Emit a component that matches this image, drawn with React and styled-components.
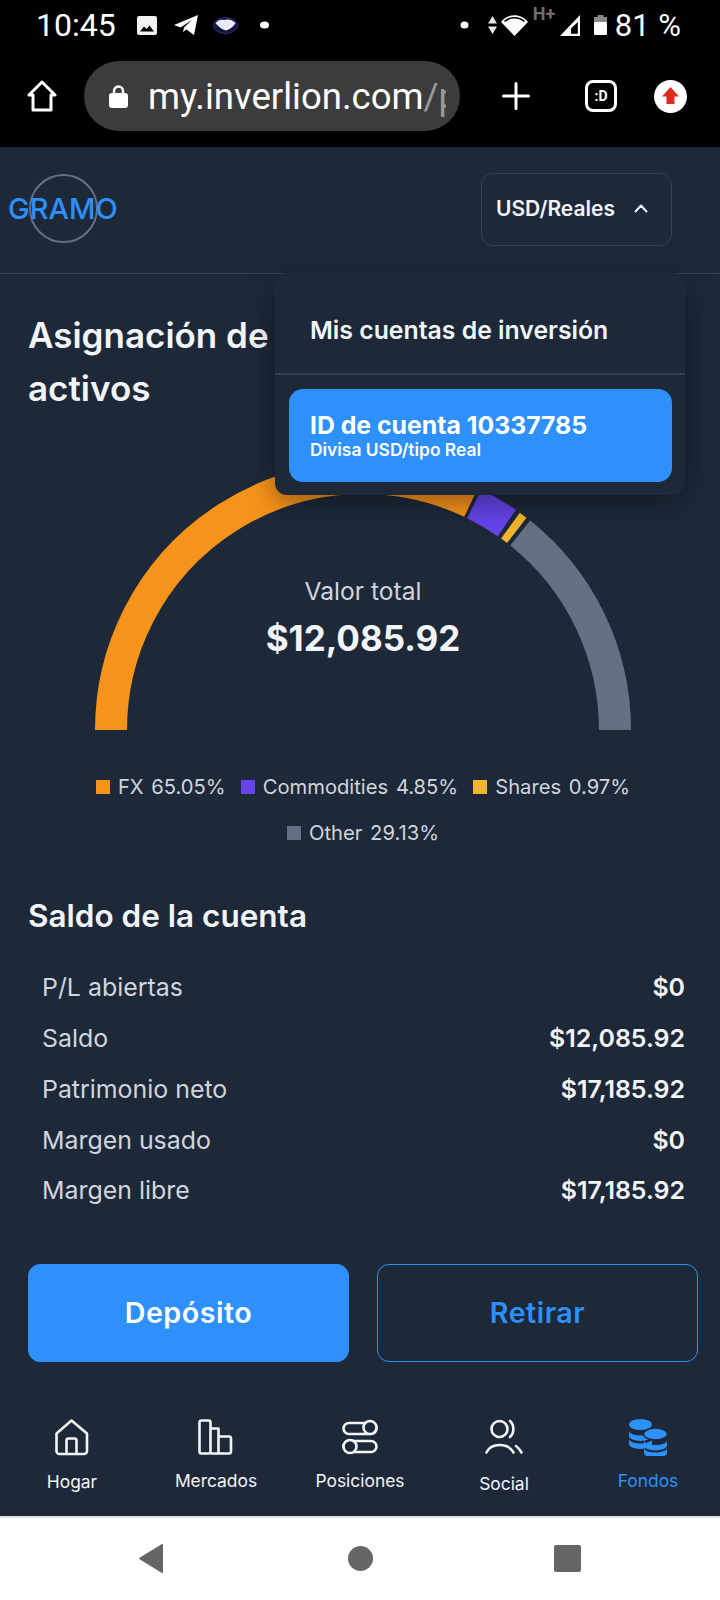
import React from "react";
import styled, { createGlobalStyle } from "styled-components";

const Navy = "#1d2939";
const Blue = "#2e90fa";
const Light = "#f2f4f7";
const Muted = "#d0d5dd";
const Line = "#344054";

const GlobalStyle = createGlobalStyle`
  html, body {
    margin: 0;
    padding: 0;
    background: ${Navy};
  }
  * { box-sizing: border-box; }
`;

const Page = styled.div`
  display: flex;
  flex-direction: column;
  width: 720px;
  height: 1600px;
  overflow: hidden;
  background: ${Navy};
  font-family: "Inter", "Liberation Sans", sans-serif;
`;

/* phone chrome */
const StatusBar = styled.div`
  display: flex;
  align-items: center;
  height: 50px;
  padding: 0 39px 0 36px;
  background: #000;
  color: #fff;
  font-family: "Roboto", "Liberation Sans", sans-serif;
`;

const Clock = styled.span`
  font-size: 32px;
  font-weight: 400;
  width: 79px;
  white-space: nowrap;
`;

const Battery = styled.span`
  font-size: 31px;
  margin-left: 8px;
  white-space: nowrap;
  word-spacing: 1px;
`;

const StatusIcon = styled.svg`
  flex: none;
  margin-left: ${(p) => p.$gap || 0}px;
  margin-top: ${(p) => p.$top || 0}px;
`;

const Spacer = styled.div`
  flex: 1;
`;

const HPlus = styled.span`
  align-self: flex-start;
  margin: 3px 0 0 5px;
  width: 24px;
  font-size: 18px;
  font-weight: 700;
  color: #6e6e6e;
`;

const BrowserBar = styled.div`
  display: flex;
  align-items: center;
  height: 97px;
  padding: 0 33px 5px 27px;
  background: #000;
`;

const UrlPill = styled.div`
  display: flex;
  align-items: center;
  flex: none;
  width: 376px;
  height: 70px;
  margin-left: 27px;
  padding-left: 25px;
  border-radius: 35px;
  background: #3c3c3c;
`;

const UrlText = styled.span`
  display: block;
  width: 298px;
  margin-left: 20px;
  overflow: hidden;
  font-family: "Roboto", "Liberation Sans", sans-serif;
  font-size: 36.5px;
  color: #fff;
  white-space: nowrap;
`;

const UrlRest = styled.span`
  color: #9a9a9a;
`;

const TabCount = styled.div`
  display: flex;
  align-items: center;
  justify-content: center;
  flex: none;
  width: 32px;
  height: 32px;
  margin-left: 55px;
  border: 3px solid #fff;
  border-radius: 8px;
  font-family: "Roboto", "Liberation Sans", sans-serif;
  font-size: 14px;
  font-weight: 700;
  color: #fff;
`;

const SystemNav = styled.div`
  display: flex;
  align-items: center;
  height: 84px;
  border-top: 2px solid #e2e2e0;
  background: #fff;
  padding-left: 139px;
  padding-bottom: 2px;
`;

/* app header */
const Header = styled.header`
  position: relative;
  display: flex;
  align-items: center;
  justify-content: space-between;
  height: 127px;
  padding: 0 48px 2px 29px;
  border-bottom: 1px solid ${Line};
`;

const LogoRing = styled.div`
  position: relative;
  width: 69px;
  height: 69px;
  margin-top: -2px;
  border: 2px solid #667085;
  border-radius: 50%;
`;

const LogoText = styled.span`
  position: absolute;
  left: -23px;
  top: 16px;
  font-size: 29px;
  font-weight: 500;
  line-height: 34px;
  color: ${Blue};
`;

const AccountSelect = styled.div`
  display: flex;
  align-items: center;
  width: 191px;
  height: 73px;
  padding: 0 0 2px 14px;
  border: 1px solid ${Line};
  border-radius: 12px;
  font-size: 21px;
  font-weight: 600;
  color: ${Light};
`;

const Chevron = styled.svg`
  margin-left: 19px;
`;

const Dropdown = styled.div`
  position: absolute;
  z-index: 5;
  top: 126px;
  left: 275px;
  width: 410px;
  height: 222px;
  border-radius: 12px;
  background: ${Navy};
  box-shadow: 0 8px 28px rgba(0, 0, 0, 0.38);
`;

const DropdownTitle = styled.div`
  display: flex;
  align-items: center;
  height: 102px;
  padding: 14px 0 0 35px;
  border-bottom: 2px solid ${Line};
  font-size: 24.8px;
  font-weight: 600;
  color: ${Light};
`;

const AccountCard = styled.div`
  display: flex;
  flex-direction: column;
  justify-content: center;
  height: 93px;
  margin: 14px 13px 0 14px;
  padding: 0 21px;
  border-radius: 14px;
  background: ${Blue};
  color: #fff;
`;

const AccountId = styled.div`
  font-size: 24.8px;
  font-weight: 700;
  line-height: 28px;
`;

const AccountType = styled.div`
  font-size: 17.4px;
  font-weight: 600;
  line-height: 22px;
`;

/* asset allocation */
const Heading = styled.h1`
  width: 260px;
  margin: 35px 0 0 28px;
  font-size: 35px;
  font-weight: 600;
  line-height: 53px;
  color: ${Light};
`;

const ChartWrap = styled.div`
  position: relative;
  height: 270px;
  margin-top: 46px;
`;

const ChartCenter = styled.div`
  position: absolute;
  top: 112px;
  left: 6px;
  right: 0;
  text-align: center;
`;

const ChartLabel = styled.div`
  font-size: 24.6px;
  line-height: 36px;
  color: ${Muted};
`;

const ChartValue = styled.div`
  margin-top: 7px;
  font-size: 35px;
  font-weight: 700;
  line-height: 44px;
  color: ${Light};
`;

const Legend = styled.div`
  display: flex;
  flex-wrap: wrap;
  justify-content: center;
  gap: 22px 15px;
  margin-top: 44px;
  padding: 0 40px 0 46px;
`;

const LegendItem = styled.div`
  display: flex;
  align-items: center;
  gap: 8px;
  font-size: 20.2px;
  line-height: 24px;
  word-spacing: 2px;
  color: ${Muted};
`;

const Swatch = styled.span`
  width: 14px;
  height: 14px;
  background: ${(p) => p.$color};
`;

/* balance */
const SubHeading = styled.h2`
  margin: 53px 0 0 28px;
  font-size: 31.5px;
  font-weight: 600;
  line-height: 36px;
  color: ${Light};
`;

const BalanceList = styled.div`
  margin: 28px 35px 0 42px;
`;

const BalanceRow = styled.div`
  display: flex;
  align-items: center;
  justify-content: space-between;
  height: 50.75px;
  font-size: 24.9px;
  color: ${Muted};
`;

const BalanceValue = styled.span`
  font-weight: 600;
  color: ${Light};
`;

const Actions = styled.div`
  display: flex;
  gap: 28px;
  margin: 48px 22px 0 28px;
`;

const ActionButton = styled.button`
  flex: 1;
  height: 98px;
  border: 1px solid ${Blue};
  border-radius: 12px;
  background: ${(p) => (p.$primary ? Blue : "transparent")};
  color: ${(p) => (p.$primary ? "#fff" : Blue)};
  font-family: inherit;
  font-size: 28.7px;
  font-weight: 600;
  letter-spacing: 0.5px;
`;

/* bottom tabs */
const TabBar = styled.nav`
  display: flex;
  flex: 1;
  padding: 57px 0 0 0;
`;

const Tab = styled.div`
  display: flex;
  flex-direction: column;
  align-items: center;
  width: 144px;
  font-size: 17.4px;
  color: ${(p) => (p.$active ? Blue : Light)};
`;

const TabLabel = styled.span`
  margin-top: ${(p) => p.$offset}px;
  line-height: 24px;
`;

const cx = 363;
const cy = 269;
const r = 252;

const point = (deg) => {
  const a = (deg * Math.PI) / 180;
  return [cx - r * Math.cos(a), cy - r * Math.sin(a)];
};

const arc = (from, to) => {
  const [x1, y1] = point(from);
  const [x2, y2] = point(to);
  return `M${x1} ${y1} A${r} ${r} 0 0 1 ${x2} ${y2}`;
};

const segments = [
  { color: "#f7931a", from: 0, to: 115.4 },
  { color: "#6544e9", from: 116.2, to: 124.8 },
  { color: "#f3b52e", from: 125.8, to: 127.6 },
  { color: "#667085", from: 128.6, to: 180 },
];

const legend = [
  { color: "#f7931a", name: "FX", value: "65.05%" },
  { color: "#6544e9", name: "Commodities", value: "4.85%" },
  { color: "#f3b52e", name: "Shares", value: "0.97%" },
  { color: "#667085", name: "Other", value: "29.13%" },
];

const balances = [
  ["P/L abiertas", "$0"],
  ["Saldo", "$12,085.92"],
  ["Patrimonio neto", "$17,185.92"],
  ["Margen usado", "$0"],
  ["Margen libre", "$17,185.92"],
];

const HomeIcon = () => (
  <svg width="36" height="37" viewBox="0 0 36 37" fill="none" stroke="currentColor" strokeWidth="2.6" strokeLinejoin="round">
    <path d="M2.5 14.5 L17.5 1.5 L33 14.5 V32 a3 3 0 0 1 -3 3 H5.5 a3 3 0 0 1 -3 -3 Z" />
    <path d="M12.5 35 V21.5 a2 2 0 0 1 2 -2 h6 a2 2 0 0 1 2 2 V35" />
  </svg>
);

const MarketsIcon = () => (
  <svg width="36" height="37" viewBox="0 0 36 37" fill="none" stroke="currentColor" strokeWidth="2.6" strokeLinejoin="round">
    <rect x="1.5" y="1.5" width="11" height="33" rx="2" />
    <path d="M12.5 9.5 H20.5 V34.5" />
    <path d="M20.5 17.5 H31 a2 2 0 0 1 2 2 V32.5 a2 2 0 0 1 -2 2 H12.5" />
  </svg>
);

const PositionsIcon = () => (
  <svg width="36" height="37" viewBox="0 0 36 37" fill="none" stroke="currentColor" strokeWidth="2.6">
    <rect x="1.5" y="4" width="33" height="11" rx="5.5" />
    <circle cx="28" cy="8.5" r="6.5" fill={Navy} />
    <rect x="1.5" y="22" width="33" height="11" rx="5.5" />
    <circle cx="8" cy="27.5" r="6.5" fill={Navy} />
  </svg>
);

const SocialIcon = () => (
  <svg width="38" height="37" viewBox="0 0 38 37" fill="none" stroke="currentColor" strokeWidth="2.6" strokeLinecap="round">
    <circle cx="14.5" cy="10" r="8" />
    <path d="M25 2 C29.5 6 29.5 14 25 18" />
    <path d="M1.5 33.5 C6 23.5 23 23.5 28.5 33.5" />
    <path d="M31 27 C33 28.5 35 31 36.5 33.5" />
  </svg>
);

const disc = (x, y) => `M${x} ${y} a11.5 4.5 0 0 0 23 0 v5 a11.5 5 0 0 1 -23 0 z`;

const FundsIcon = () => (
  <svg width="38" height="37" viewBox="0 0 38 37" fill="currentColor">
    <ellipse cx="11.5" cy="5.5" rx="11.5" ry="5.5" />
    <path d={disc(0, 12)} />
    <path d={disc(0, 20)} />
    <g stroke={Navy} strokeWidth="1.5">
      <ellipse cx="26.5" cy="15" rx="12" ry="6" />
    </g>
    <path d={disc(15, 21.5)} />
    <path d={disc(15, 29)} />
  </svg>
);

const tabs = [
  { label: "Hogar", Icon: HomeIcon, offset: 14 },
  { label: "Mercados", Icon: MarketsIcon, offset: 13 },
  { label: "Posiciones", Icon: PositionsIcon, offset: 13 },
  { label: "Social", Icon: SocialIcon, offset: 16 },
  { label: "Fondos", Icon: FundsIcon, offset: 13, active: true },
];

export default function App() {
  return (
    <Page>
      <GlobalStyle />
      <StatusBar>
        <Clock>10:45</Clock>
        <StatusIcon $gap={22} width="20" height="19" viewBox="0 0 20 19">
          <rect width="20" height="19" rx="2" fill="#f2f2f2" />
          <path d="M3 15.5 L7 10.5 L9.5 13 L12.5 9.5 L17 15.5 Z" fill="#000" />
        </StatusIcon>
        <StatusIcon $gap={17} width="24" height="20" viewBox="0 0 24 20">
          <path d="M0 10 L24 0 L20 20 L12.5 14.5 L9 17 L10 12.5 L18 5 L6.5 12.5 Z" fill="#fff" />
        </StatusIcon>
        <StatusIcon $gap={15} width="25" height="17" viewBox="0 0 25 17">
          <ellipse cx="12.5" cy="8.5" rx="12" ry="8" fill="#12143f" stroke="#2b2f78" />
          <path d="M2.5 6 C5 3 8 2 11 3 L14 2.5 C17 2 20 3.5 22.5 6 C21 9 17 12.5 13 13.5 C9 12.5 5 9.5 2.5 6 Z" fill="#e8ecf8" />
        </StatusIcon>
        <StatusIcon $gap={22} width="9" height="8" viewBox="0 0 9 8">
          <ellipse cx="4.5" cy="4" rx="4.5" ry="3.5" fill="#fff" />
        </StatusIcon>
        <Spacer />
        <StatusIcon width="9" height="8" viewBox="0 0 9 8">
          <ellipse cx="4.5" cy="4" rx="4" ry="3.5" fill="#fff" />
        </StatusIcon>
        <StatusIcon $gap={19} width="9" height="18" viewBox="0 0 9 18">
          <path d="M4.5 0 L9 7.5 H0 Z M0 10.5 H9 L4.5 18 Z" fill="#e6e6e6" />
        </StatusIcon>
        <StatusIcon $gap={4} width="27" height="21" viewBox="0 0 27 21">
          <path d="M13.5 21 L0 7 C7 -2 20 -2 27 7 Z" fill="#fff" />
          <path d="M3.5 6.5 C9 1.5 18 1.5 23.5 6.5" fill="none" stroke="#000" strokeWidth="1.6" />
        </StatusIcon>
        <HPlus>H+</HPlus>
        <StatusIcon $gap={3} width="20" height="21" viewBox="0 0 20 21">
          <path fillRule="evenodd" d="M0 21 L20 0 V21 Z M11 18.8 H17.8 V7 L11 13.5 Z" fill="#fff" />
        </StatusIcon>
        <StatusIcon $gap={14} width="13" height="20" viewBox="0 0 13 20">
          <rect x="3.5" y="0" width="6" height="3" fill="#8a8a8a" />
          <rect x="0" y="2" width="13" height="5" fill="#8a8a8a" />
          <rect x="0" y="7" width="13" height="13" rx="1" fill="#fff" />
        </StatusIcon>
        <Battery>81 %</Battery>
      </StatusBar>

      <BrowserBar>
        <svg width="30" height="32" viewBox="0 0 30 32" fill="none" stroke="#fff" strokeWidth="3" strokeLinejoin="round">
          <path d="M15 2 L28 15 H24 V30 H6 V15 H2 Z" />
        </svg>
        <UrlPill>
          <svg width="19" height="23" viewBox="0 0 19 23" fill="#fff">
            <path d="M5 9 V6 a4.5 4.5 0 0 1 9 0 V9" fill="none" stroke="#fff" strokeWidth="2.4" />
            <rect y="8" width="19" height="15" rx="3" />
          </svg>
          <UrlText>
            my.inverlion.com<UrlRest>/p</UrlRest>
          </UrlText>
        </UrlPill>
        <svg width="28" height="28" viewBox="0 0 28 28" style={{ marginLeft: 42 }} stroke="#fff" strokeWidth="3" strokeLinecap="round">
          <path d="M14 1.5 V26.5 M1.5 14 H26.5" />
        </svg>
        <TabCount>:D</TabCount>
        <svg width="33" height="33" viewBox="0 0 33 33" style={{ marginLeft: 37 }}>
          <circle cx="16.5" cy="16.5" r="16.5" fill="#fff" />
          <path d="M16.5 7 L25 16.5 H20.5 V24 H12.5 V16.5 H8 Z" fill="#dc2b20" />
        </svg>
      </BrowserBar>

      <Header>
        <LogoRing>
          <LogoText>GRAMO</LogoText>
        </LogoRing>
        <AccountSelect>
          USD/Reales
          <Chevron width="14" height="9" viewBox="0 0 14 9" fill="none" stroke={Light} strokeWidth="2" strokeLinecap="round" strokeLinejoin="round">
            <path d="M1.5 7.5 L7 1.5 L12.5 7.5" />
          </Chevron>
        </AccountSelect>
        <Dropdown>
          <DropdownTitle>Mis cuentas de inversión</DropdownTitle>
          <AccountCard>
            <AccountId>ID de cuenta 10337785</AccountId>
            <AccountType>Divisa USD/tipo Real</AccountType>
          </AccountCard>
        </Dropdown>
      </Header>

      <Heading>Asignación de activos</Heading>

      <ChartWrap>
        <svg width="720" height="270" viewBox="0 0 720 270" fill="none" strokeWidth="32">
          {segments.map((s) => (
            <path key={s.color} d={arc(s.from, s.to)} stroke={s.color} />
          ))}
        </svg>
        <ChartCenter>
          <ChartLabel>Valor total</ChartLabel>
          <ChartValue>$12,085.92</ChartValue>
        </ChartCenter>
      </ChartWrap>

      <Legend>
        {legend.map((item) => (
          <LegendItem key={item.name}>
            <Swatch $color={item.color} />
            {item.name} {item.value}
          </LegendItem>
        ))}
      </Legend>

      <SubHeading>Saldo de la cuenta</SubHeading>

      <BalanceList>
        {balances.map(([label, value]) => (
          <BalanceRow key={label}>
            {label}
            <BalanceValue>{value}</BalanceValue>
          </BalanceRow>
        ))}
      </BalanceList>

      <Actions>
        <ActionButton $primary>Depósito</ActionButton>
        <ActionButton>Retirar</ActionButton>
      </Actions>

      <TabBar>
        {tabs.map(({ label, Icon, offset, active }) => (
          <Tab key={label} $active={active}>
            <Icon />
            <TabLabel $offset={offset}>{label}</TabLabel>
          </Tab>
        ))}
      </TabBar>

      <SystemNav>
        <svg width="24" height="29" viewBox="0 0 24 29" fill="#666">
          <path d="M24 1 V28 a1 1 0 0 1 -1.5 .8 L1 15.5 a1.2 1.2 0 0 1 0 -2 L22.5 .2 a1 1 0 0 1 1.5 .8 Z" />
        </svg>
        <svg width="25" height="25" viewBox="0 0 25 25" fill="#666" style={{ marginLeft: 185 }}>
          <circle cx="12.5" cy="12.5" r="12.5" />
        </svg>
        <svg width="27" height="27" viewBox="0 0 27 27" fill="#666" style={{ marginLeft: 181 }}>
          <rect width="27" height="27" rx="2" />
        </svg>
      </SystemNav>
    </Page>
  );
}
